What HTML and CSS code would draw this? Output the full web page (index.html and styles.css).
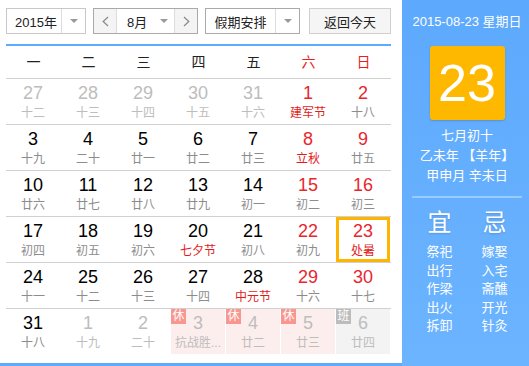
FILE: index.html
```html
<!DOCTYPE html>
<html lang="zh-CN">
<head>
<meta charset="utf-8">
<title>万年历</title>
<link rel="stylesheet" href="styles.css">
</head>
<body>
<div class="cal">
  <div class="main">
    <div class="toolbar">
      <div class="sel sel-year">
        <span class="sel-text">2015年</span>
        <span class="sel-arrow"><i class="tri"></i></span>
      </div>
      <div class="month-group">
        <span class="nav"><svg width="7" height="11" viewBox="0 0 7 11"><polyline points="6,1 1.2,5.5 6,10" fill="none" stroke="#888" stroke-width="1.2"/></svg></span>
        <span class="month-sel"><span class="month-text">8月</span><i class="tri"></i></span>
        <span class="nav"><svg width="7" height="11" viewBox="0 0 7 11"><polyline points="1,1 5.8,5.5 1,10" fill="none" stroke="#888" stroke-width="1.2"/></svg></span>
      </div>
      <div class="sel sel-holiday">
        <span class="sel-text">假期安排</span>
        <span class="sel-arrow"><i class="tri"></i></span>
      </div>
      <div class="btn-today">返回今天</div>
    </div>
    <div class="weekdays">
      <span>一</span><span>二</span><span>三</span><span>四</span><span>五</span><span class="red">六</span><span class="red">日</span>
    </div>
    <div class="weeks">
      <div class="week">
        <div class="day other"><span class="num">27</span><span class="lunar">十二</span></div>
        <div class="day other"><span class="num">28</span><span class="lunar">十三</span></div>
        <div class="day other"><span class="num">29</span><span class="lunar">十四</span></div>
        <div class="day other"><span class="num">30</span><span class="lunar">十五</span></div>
        <div class="day other"><span class="num">31</span><span class="lunar">十六</span></div>
        <div class="day weekend"><span class="num">1</span><span class="lunar fest">建军节</span></div>
        <div class="day weekend"><span class="num">2</span><span class="lunar">十八</span></div>
      </div>
      <div class="week">
        <div class="day"><span class="num">3</span><span class="lunar">十九</span></div>
        <div class="day"><span class="num">4</span><span class="lunar">二十</span></div>
        <div class="day"><span class="num">5</span><span class="lunar">廿一</span></div>
        <div class="day"><span class="num">6</span><span class="lunar">廿二</span></div>
        <div class="day"><span class="num">7</span><span class="lunar">廿三</span></div>
        <div class="day weekend"><span class="num">8</span><span class="lunar fest">立秋</span></div>
        <div class="day weekend"><span class="num">9</span><span class="lunar">廿五</span></div>
      </div>
      <div class="week">
        <div class="day"><span class="num">10</span><span class="lunar">廿六</span></div>
        <div class="day"><span class="num">11</span><span class="lunar">廿七</span></div>
        <div class="day"><span class="num">12</span><span class="lunar">廿八</span></div>
        <div class="day"><span class="num">13</span><span class="lunar">廿九</span></div>
        <div class="day"><span class="num">14</span><span class="lunar">初一</span></div>
        <div class="day weekend"><span class="num">15</span><span class="lunar">初二</span></div>
        <div class="day weekend"><span class="num">16</span><span class="lunar">初三</span></div>
      </div>
      <div class="week">
        <div class="day"><span class="num">17</span><span class="lunar">初四</span></div>
        <div class="day"><span class="num">18</span><span class="lunar">初五</span></div>
        <div class="day"><span class="num">19</span><span class="lunar">初六</span></div>
        <div class="day"><span class="num">20</span><span class="lunar fest">七夕节</span></div>
        <div class="day"><span class="num">21</span><span class="lunar">初八</span></div>
        <div class="day weekend"><span class="num">22</span><span class="lunar">初九</span></div>
        <div class="day weekend today"><span class="num">23</span><span class="lunar fest">处暑</span></div>
      </div>
      <div class="week">
        <div class="day"><span class="num">24</span><span class="lunar">十一</span></div>
        <div class="day"><span class="num">25</span><span class="lunar">十二</span></div>
        <div class="day"><span class="num">26</span><span class="lunar">十三</span></div>
        <div class="day"><span class="num">27</span><span class="lunar">十四</span></div>
        <div class="day"><span class="num">28</span><span class="lunar fest">中元节</span></div>
        <div class="day weekend"><span class="num">29</span><span class="lunar">十六</span></div>
        <div class="day weekend"><span class="num">30</span><span class="lunar">十七</span></div>
      </div>
      <div class="week">
        <div class="day"><span class="num">31</span><span class="lunar">十八</span></div>
        <div class="day other"><span class="num">1</span><span class="lunar">十九</span></div>
        <div class="day other"><span class="num">2</span><span class="lunar">二十</span></div>
        <div class="day other rest"><i class="badge">休</i><span class="num">3</span><span class="lunar">抗战胜...</span></div>
        <div class="day other rest"><i class="badge">休</i><span class="num">4</span><span class="lunar">廿二</span></div>
        <div class="day other rest"><i class="badge">休</i><span class="num">5</span><span class="lunar">廿三</span></div>
        <div class="day other work"><i class="badge">班</i><span class="num">6</span><span class="lunar">廿四</span></div>
      </div>
    </div>
  </div>
  <aside class="side">
    <div class="side-date">2015-08-23 星期日</div>
    <div class="big-day">23</div>
    <div class="side-lunar">
      <div>七月初十</div>
      <div>乙未年 【羊年】</div>
      <div>甲申月 辛未日</div>
    </div>
    <div class="side-sep"></div>
    <div class="yiji">
      <div class="yj-col">
        <div class="yj-title">宜</div>
        <div class="yj-item">祭祀</div>
        <div class="yj-item">出行</div>
        <div class="yj-item">作梁</div>
        <div class="yj-item">出火</div>
        <div class="yj-item">拆卸</div>
      </div>
      <div class="yj-col">
        <div class="yj-title">忌</div>
        <div class="yj-item">嫁娶</div>
        <div class="yj-item">入宅</div>
        <div class="yj-item">斋醮</div>
        <div class="yj-item">开光</div>
        <div class="yj-item">针灸</div>
      </div>
    </div>
  </aside>
</div>
</body>
</html>
```

FILE: styles.css
```css
html, body {
  margin: 0;
  padding: 0;
  background: #fff;
}

body {
  font-family: "Liberation Sans", "Noto Sans CJK SC", sans-serif;
  color: #000;
}

.cal {
  display: flex;
  width: 529px;
  height: 366px;
  overflow: hidden;
}

.main {
  width: 402px;
  height: 366px;
  box-sizing: border-box;
  padding: 8px 0 0 6px;
  border-bottom: 3px solid #5eabfd;
  background: #fff;
}

/* toolbar */
.toolbar {
  display: flex;
  width: 385px;
  height: 26px;
  font-size: 13px;
  color: #222;
}

.sel {
  display: flex;
  box-sizing: border-box;
  height: 26px;
  border: 1px solid #c8c8c8;
  background: #fff;
}

.sel-text {
  display: flex;
  align-items: center;
  justify-content: center;
  border-right: 1px solid #dcdcdc;
}

.sel-arrow {
  display: flex;
  align-items: center;
  justify-content: center;
  flex: 1;
}

.tri {
  display: block;
  width: 0;
  height: 0;
  border-left: 4px solid transparent;
  border-right: 4px solid transparent;
  border-top: 4px solid #999;
}

.sel-year {
  width: 80px;
  margin-right: 7px;
}

.sel-year .sel-text {
  width: 55px;
  padding-left: 4px;
  box-sizing: border-box;
}

.sel-holiday {
  width: 95px;
  margin-right: 9px;
  border-color: #a9a9a9;
}

.sel-holiday .sel-text {
  width: 69px;
}

.month-group {
  display: flex;
  box-sizing: border-box;
  width: 105px;
  height: 26px;
  margin-right: 7px;
  border: 1px solid #a9a9a9;
}

.nav {
  display: flex;
  align-items: center;
  justify-content: center;
  width: 22px;
  background: #f4f4f4;
}

.month-sel {
  display: flex;
  align-items: center;
  box-sizing: border-box;
  width: 59px;
  border-left: 1px solid #dcdcdc;
  border-right: 1px solid #dcdcdc;
  background: #fff;
  padding-left: 10px;
}

.month-text {
  width: 33px;
}

.btn-today {
  display: flex;
  align-items: center;
  justify-content: center;
  box-sizing: border-box;
  width: 82px;
  height: 26px;
  border: 1px solid #cfcfcf;
  background: #f5f5f5;
}

/* weekday header */
.weekdays {
  display: grid;
  grid-template-columns: repeat(7, 55px);
  width: 385px;
  height: 32px;
  margin-top: 10px;
  border-top: 2px solid #5eabfd;
  border-bottom: 1px solid #d0d0d0;
  font-size: 14px;
  line-height: 32px;
  text-align: center;
  color: #222;
}

.red {
  color: #ee1c1c;
}

/* weeks */
.week {
  display: grid;
  grid-template-columns: repeat(7, 54px);
  column-gap: 1px;
  width: 385px;
  height: 45px;
  border-bottom: 1px solid #d0d0d0;
}

.week:last-child {
  border-bottom: none;
}

.day {
  position: relative;
  box-sizing: border-box;
  height: 45px;
  padding-top: 4px;
  text-align: center;
}

.num {
  display: block;
  font-size: 18px;
  line-height: 20px;
  color: #000;
}

.lunar {
  display: block;
  margin-top: 2px;
  font-size: 12px;
  line-height: 16px;
  color: #8c8c8c;
  white-space: nowrap;
}

.weekend .num {
  color: #e8262e;
}

.fest {
  color: #e31b1b;
}

.other .num {
  color: #bdbdbd;
}

.other .lunar {
  color: #bdbdbd;
}

.today {
  border: 3px solid #ffb400;
  padding-top: 1px;
}

.rest {
  background: #fdeeee;
}

.work {
  background: #f3f3f3;
}

.badge {
  position: absolute;
  left: 0;
  top: 0;
  width: 15px;
  height: 15px;
  font-style: normal;
  font-size: 12px;
  line-height: 15px;
  text-align: center;
  color: #fff;
  background: #f8968f;
}

.work .badge {
  background: #bcbcbc;
}

/* side panel */
.side {
  width: 127px;
  height: 366px;
  box-sizing: border-box;
  padding: 14px 0 0 3px;
  background: linear-gradient(#5da9fd, #6cb4ff);
  color: #fff;
  text-align: center;
}

.side-date {
  font-size: 13px;
  line-height: 16px;
  white-space: nowrap;
}

.big-day {
  width: 75px;
  height: 74px;
  margin: 16px auto 0;
  border-radius: 3px;
  background: #ffb800;
  box-shadow: 0 1px 2px rgba(0, 0, 0, 0.15);
  font-size: 52px;
  line-height: 74px;
}

.side-lunar {
  margin-top: 6px;
  font-size: 13px;
  line-height: 20px;
  white-space: nowrap;
}

.side-sep {
  width: 110px;
  height: 2px;
  margin: 10px 0 0 7px;
  background: rgba(255, 255, 255, 0.35);
}

.yiji {
  display: flex;
  justify-content: center;
  gap: 5px;
  margin-top: 11px;
}

.yj-col {
  width: 50px;
}

.yj-title {
  font-size: 24px;
  line-height: 28px;
  margin-bottom: 6px;
  text-shadow: 0 1px 2px rgba(0, 0, 0, 0.15);
}

.yj-item {
  font-size: 13px;
  line-height: 18.5px;
}
```
